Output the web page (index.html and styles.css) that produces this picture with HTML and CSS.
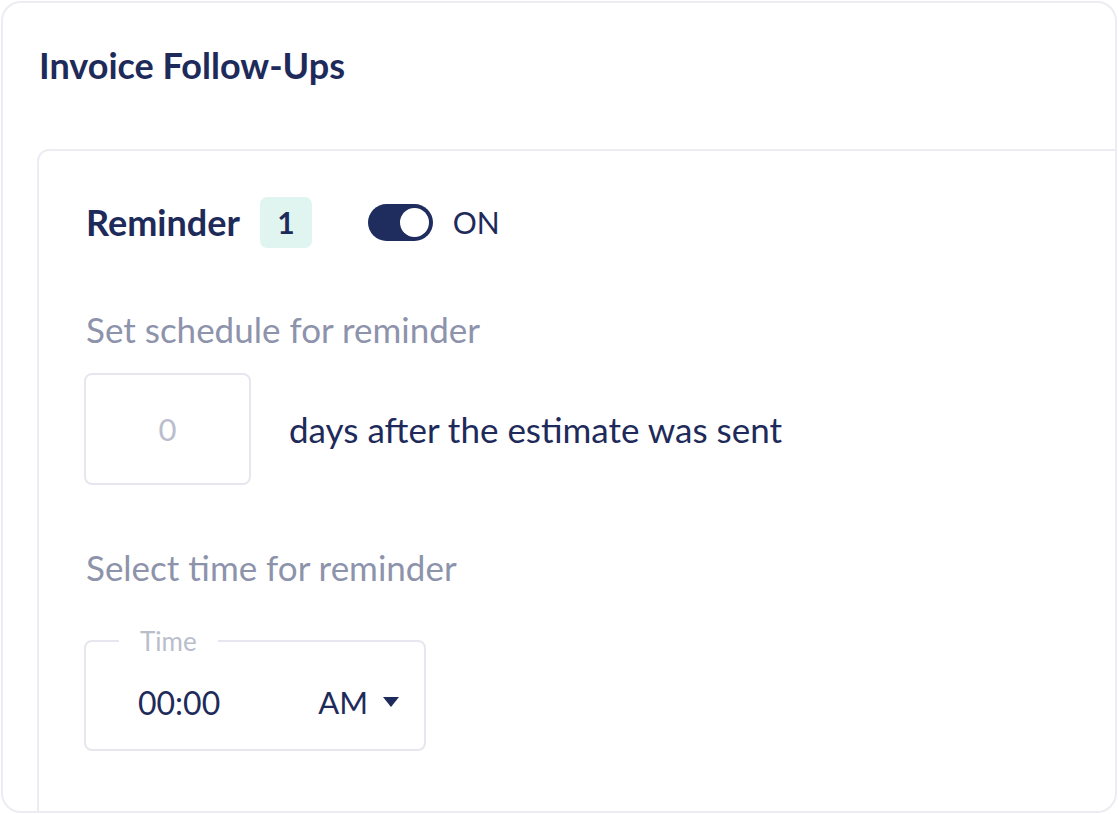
FILE: index.html
```html
<!DOCTYPE html>
<html lang="en">
<head>
    <meta charset="UTF-8">
    <meta name="viewport" content="width=device-width, initial-scale=1.0">
    <title>Invoice Follow-Ups</title>
    <link rel="stylesheet" href="styles.css">
</head>
<body>
    <div class="card">
        <h1 class="card-title">Invoice Follow-Ups</h1>

        <div class="reminder">
            <div class="reminder-head">
                <span class="reminder-name">Reminder</span>
                <span class="badge">1</span>
                <label class="switch">
                    <input type="checkbox" checked>
                    <span class="track"><span class="knob"></span></span>
                    <span class="switch-label">ON</span>
                </label>
            </div>

            <p class="field-label">Set schedule for reminder</p>
            <div class="days-row">
                <input type="text" class="days-input" placeholder="0">
                <span class="days-text">days after the estimate was sent</span>
            </div>

            <p class="field-label field-label-time">Select time for reminder</p>
            <fieldset class="time-box">
                <legend>Time</legend>
                <div class="time-inner">
                    <span class="time-value">00:00</span>
                    <span class="ampm">AM
                        <svg width="18" height="12" viewBox="0 0 18 12"><path d="M1 1h16L9 11z" fill="#1e2b5a"/></svg>
                    </span>
                </div>
            </fieldset>
        </div>
    </div>
</body>
</html>
```

FILE: styles.css
```css
body {
    margin: 0;
    padding: 1px;
    background-color: #fff;
    font-family: Lato, "Open Sans", sans-serif;
    color: #1e2b5a;
}

.card {
    box-sizing: border-box;
    height: 812px;
    border: 2px solid #ececf2;
    border-radius: 20px;
    padding: 0 0 0 34px;
    overflow: hidden;
}

.card-title {
    margin: 0;
    padding: 40px 0 0 2px;
    height: 146px;
    box-sizing: border-box;
    font-size: 36px;
    line-height: 44px;
    font-weight: 700;
}

.reminder {
    width: 1200px;
    height: 700px;
    border: 2px solid #ececf2;
    border-radius: 12px;
    padding: 45px 0 0 47px;
}

.reminder-head {
    display: flex;
    align-items: center;
    height: 52px;
}

.reminder-name {
    font-size: 36px;
    font-weight: 700;
}

.badge {
    margin-left: 20px;
    width: 52px;
    height: 51px;
    border-radius: 7px;
    background-color: #e1f5f0;
    display: flex;
    align-items: center;
    justify-content: center;
    font-size: 30px;
    font-weight: 700;
}

.switch {
    display: flex;
    align-items: center;
    margin-left: 56px;
    cursor: pointer;
}

.switch input {
    display: none;
}

.track {
    width: 65px;
    height: 37px;
    border-radius: 19px;
    background-color: #1f2d5e;
    display: flex;
    align-items: center;
    justify-content: flex-end;
    padding-right: 4px;
    box-sizing: border-box;
}

.knob {
    width: 29px;
    height: 29px;
    border-radius: 50%;
    background-color: #fff;
}

.switch-label {
    margin-left: 20px;
    font-size: 30px;
}

.field-label {
    margin: 0;
    font-size: 35px;
    line-height: 42px;
    color: #8d93ab;
}

.reminder-head + .field-label {
    margin-top: 60px;
}

.days-row {
    display: flex;
    align-items: center;
    margin-top: 23px;
}

.days-input {
    width: 167px;
    height: 112px;
    box-sizing: border-box;
    border: 2px solid #e6e7ee;
    border-radius: 8px;
    text-align: center;
    font-family: inherit;
    font-size: 31px;
    color: #1e2b5a;
    margin-left: -2px;
}

.days-input::placeholder {
    color: #b9bdcc;
}

.days-text {
    margin-left: 38px;
    font-size: 35px;
}

.field-label-time {
    margin-top: 61px;
}

.time-box {
    box-sizing: border-box;
    width: 342px;
    height: 125px;
    margin: 38px 0 0 -2px;
    padding: 0;
    border: 2px solid #e6e7ee;
    border-radius: 8px;
}

.time-box legend {
    margin-left: 33px;
    padding: 0 21px;
    font-size: 26px;
    line-height: 30px;
    color: #b9bdcc;
}

.time-inner {
    display: flex;
    align-items: center;
    justify-content: space-between;
    height: 88px;
    padding: 4px 24px 0 52px;
    box-sizing: border-box;
}

.time-value {
    font-size: 32px;
}

.ampm {
    display: flex;
    align-items: center;
    gap: 14px;
    font-size: 31px;
}
```
